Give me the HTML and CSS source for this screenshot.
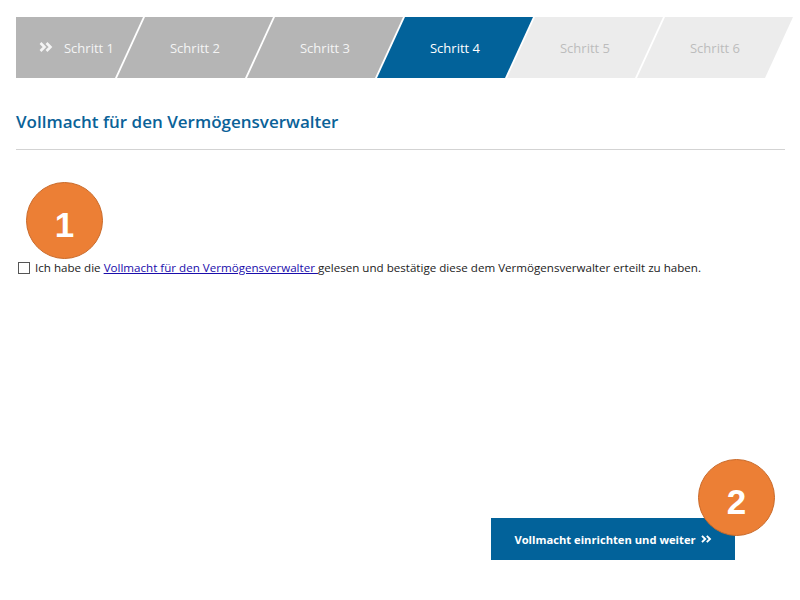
FILE: index.html
```html
<!DOCTYPE html>
<html lang="de">
<head>
<meta charset="utf-8">
<title>Schritt 4</title>
<link rel="stylesheet" href="styles.css">
</head>
<body>
<div class="page">
  <nav class="steps">
    <div class="step step-first done"><svg class="chev" width="14" height="10" viewBox="0 0 14 10"><path d="M1.5 1 L5.5 5 L1.5 9 M7.5 1 L11.5 5 L7.5 9" fill="none" stroke="#f4f4f4" stroke-width="2.6"/></svg>Schritt 1</div>
    <div class="step done">Schritt 2</div>
    <div class="step done">Schritt 3</div>
    <div class="step active">Schritt 4</div>
    <div class="step todo">Schritt 5</div>
    <div class="step todo">Schritt 6</div>
  </nav>
  <h1 class="title">Vollmacht für den Vermögensverwalter</h1>
  <hr class="divider">
  <label class="consent">
    <input type="checkbox" class="box">
    <span>Ich habe die <a href="#" class="link">Vollmacht für den Vermögensverwalter </a>gelesen und bestätige diese dem Vermögensverwalter erteilt zu haben.</span>
  </label>
  <div class="actions">
    <button class="btn">Vollmacht einrichten und weiter<svg class="btn-chev" width="11" height="8" viewBox="0 0 11 8"><path d="M1 0.8 L4.2 4 L1 7.2 M5.8 0.8 L9 4 L5.8 7.2" fill="none" stroke="#ffffff" stroke-width="1.9"/></svg></button>
  </div>
  <div class="badge badge-1">1</div>
  <div class="badge badge-2">2</div>
</div>
</body>
</html>
```

FILE: styles.css
```css
html, body {
  margin: 0;
  padding: 0;
  background: #ffffff;
}

.page {
  position: relative;
  width: 800px;
  height: 600px;
  padding: 17px 0 0 16px;
  box-sizing: border-box;
  font-family: "Open Sans", "DejaVu Sans", sans-serif;
}

.steps {
  display: flex;
  height: 61px;
}

.step {
  width: 156px;
  height: 61px;
  margin-left: -26px;
  display: flex;
  align-items: center;
  justify-content: center;
  font-size: 13px;
  clip-path: polygon(28px 0, 156px 0, 128px 61px, 0 61px);
}

.step-first {
  width: 127px;
  margin-left: 0;
  padding-right: 6px;
  box-sizing: border-box;
  clip-path: polygon(0 0, 127px 0, 99px 61px, 0 61px);
}

.chev {
  margin-right: 11px;
  margin-top: -2px;
}

.done {
  background: #b5b5b5;
  color: #f4f4f4;
}

.active {
  background: #02629a;
  color: #ffffff;
}

.todo {
  background: #ececec;
  color: #bcbcbc;
}

.title {
  margin: 33px 0 0 0;
  font-size: 17px;
  font-weight: 600;
  color: #0a6298;
  line-height: 22px;
}

.divider {
  margin: 16px 15px 0 0;
  border: 0;
  border-top: 1px solid #d3d3d3;
  height: 0;
}

.consent {
  display: flex;
  align-items: center;
  margin-top: 110px;
  font-size: 11.6px;
  color: #222;
}

.box {
  appearance: none;
  -webkit-appearance: none;
  margin: 0 5px 0 2px;
  width: 12px;
  height: 12px;
  border: 1px solid #555;
  background: #fff;
  box-sizing: border-box;
  border-radius: 0;
}

.link {
  color: #1a0dab;
  text-decoration: underline;
}

.actions {
  display: flex;
  justify-content: flex-end;
  margin: 243px 65px 0 0;
}

.btn {
  width: 244px;
  height: 42px;
  border: 0;
  background: #02629a;
  color: #ffffff;
  font-family: "Open Sans", "DejaVu Sans", sans-serif;
  font-size: 11.2px;
  font-weight: 700;
  display: flex;
  align-items: center;
  justify-content: center;
  padding: 0;
}

.btn-chev {
  margin-left: 5px;
}

.badge {
  position: absolute;
  width: 77px;
  height: 77px;
  border-radius: 50%;
  background: #ec7f35;
  border: 1px solid #c96a2a;
  color: #ffffff;
  font-family: "Liberation Sans", Arial, sans-serif;
  font-weight: 700;
  font-size: 35px;
  line-height: 1;
  display: flex;
  align-items: center;
  justify-content: center;
  box-sizing: border-box;
  padding-top: 8px;
}

.badge-1 {
  left: 26px;
  top: 182px;
}

.badge-2 {
  left: 698px;
  top: 459px;
}
```
